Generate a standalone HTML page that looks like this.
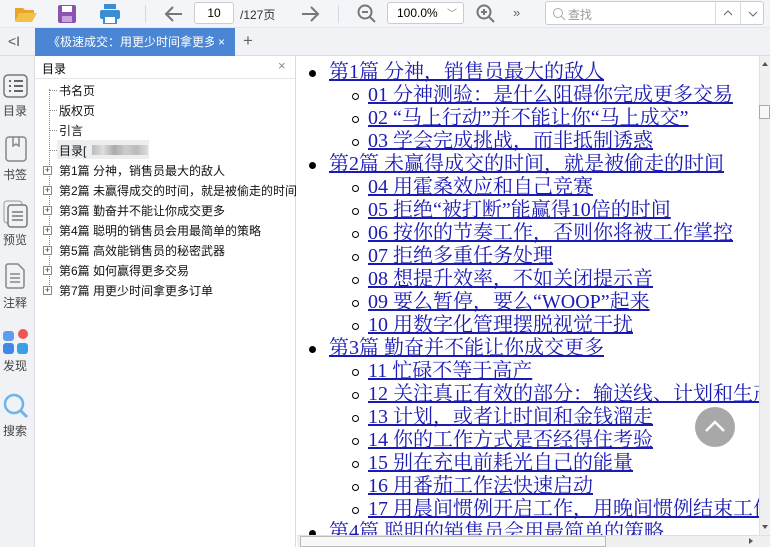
<!DOCTYPE html>
<html><head><meta charset="utf-8"><style>
*{margin:0;padding:0;box-sizing:border-box}
body{width:770px;height:547px;overflow:hidden;background:#fff;font-family:"Liberation Sans","Noto Sans CJK SC",sans-serif;position:relative}
.abs{position:absolute}
#tb{left:0;top:0;width:770px;height:28px;background:#f3f5f8;border-bottom:1px solid #e3e6ea}
#tabs{left:0;top:28px;width:770px;height:28px;background:#f0f2f5;border-bottom:1px solid #d8dbe0}
#side{left:0;top:56px;width:35px;height:491px;background:#f0f2f5;border-right:1px solid #d8dbe0}
#toc{left:35px;top:56px;width:261px;height:491px;background:#fff;border-right:1px solid #d8dbe0}
.sl{font-size:12px;color:#444;width:30px;text-align:center;left:0}
.ti{font-size:12px;color:#111;white-space:nowrap;left:59px}
.pl{left:43px;width:9px;height:9px;border:1px solid #888;font-size:9px;line-height:7px;text-align:center;color:#333;background:#fff}
#content{left:297px;top:57px;width:462px;height:478px;overflow:hidden;font-family:"Liberation Serif","Noto Serif CJK SC",serif;font-size:20px}
.l{position:absolute;white-space:nowrap;color:#1a1ab4;text-decoration:underline;line-height:23px}
.b1{position:absolute;width:7px;height:7px;border-radius:50%;background:#000}
.b2{position:absolute;width:7px;height:7px;border-radius:50%;border:1px solid #000}
</style></head><body>
<div id="tb" class="abs">
 <svg class="abs" style="left:14px;top:4px" width="24" height="20"><path d="M1 4h8l2 2h9v3H6L1 17z" fill="#e9a52b"/><path d="M5 9h18l-5 9H1z" fill="#f5c04a"/></svg>
 <svg class="abs" style="left:58px;top:5px" width="18" height="18"><rect x="0" y="0" width="18" height="18" rx="2" fill="#8c52b3"/><rect x="4" y="1" width="10" height="6" fill="#fff"/><rect x="4" y="11" width="10" height="6" fill="#c8a4dc"/></svg>
 <svg class="abs" style="left:100px;top:4px" width="20" height="20"><rect x="4" y="0" width="12" height="5" fill="#3a8fd4"/><rect x="0" y="6" width="20" height="9" rx="2" fill="#3a8fd4"/><rect x="4" y="12" width="12" height="8" fill="#fff" stroke="#3a8fd4" stroke-width="2"/></svg>
 <div class="abs" style="left:145px;top:5px;width:1px;height:18px;background:#d6d9de"></div>
 <svg class="abs" style="left:164px;top:5px" width="20" height="18"><path d="M18 9H3M9 2L2 9l7 7" stroke="#777" stroke-width="2" fill="none"/></svg>
 <div class="abs" style="left:194px;top:2px;width:40px;height:22px;border:1px solid #c9ccd1;border-radius:3px;background:#fff;font-size:12px;text-align:center;line-height:20px">10</div>
 <div class="abs" style="left:240px;top:6px;font-size:12px;color:#333">/127页</div>
 <svg class="abs" style="left:300px;top:5px" width="20" height="18"><path d="M2 9h15M11 2l7 7-7 7" stroke="#777" stroke-width="2" fill="none"/></svg>
 <div class="abs" style="left:338px;top:5px;width:1px;height:18px;background:#d6d9de"></div>
 <svg class="abs" style="left:357px;top:4px" width="20" height="20"><circle cx="8" cy="8" r="6.5" stroke="#777" stroke-width="2" fill="none"/><path d="M5 8h6M13 13l5 5" stroke="#777" stroke-width="2"/></svg>
 <div class="abs" style="left:387px;top:2px;width:77px;height:22px;border:1px solid #c9ccd1;border-radius:3px;background:#fff;font-size:12px;line-height:20px;padding-left:9px">100.0% <span style="color:#888;font-size:10px;margin-left:6px">﹀</span></div>
 <svg class="abs" style="left:476px;top:4px" width="20" height="20"><circle cx="8" cy="8" r="6.5" stroke="#777" stroke-width="2" fill="none"/><path d="M5 8h6M8 5v6M13 13l5 5" stroke="#777" stroke-width="2"/></svg>
 <div class="abs" style="left:513px;top:5px;font-size:13px;color:#666">»</div>
 <div class="abs" style="left:545px;top:1px;width:219px;height:24px;border:1px solid #c9ccd1;border-radius:3px;background:#fff">
  <svg class="abs" style="left:6px;top:5px" width="14" height="14"><circle cx="6" cy="6" r="4.5" stroke="#aaa" fill="none"/><path d="M9 9l4 4" stroke="#aaa"/></svg>
  <div class="abs" style="left:22px;top:4px;font-size:12px;color:#999">查找</div>
  <div class="abs" style="left:169px;top:0;width:1px;height:22px;background:#d6d9de"></div>
  <div class="abs" style="left:194px;top:0;width:1px;height:22px;background:#d6d9de"></div>
  <svg class="abs" style="left:177px;top:8px" width="10" height="6"><path d="M1 5l4-4 4 4" stroke="#666" fill="none"/></svg>
  <svg class="abs" style="left:202px;top:9px" width="10" height="6"><path d="M1 1l4 4 4-4" stroke="#666" fill="none"/></svg>
 </div>
</div>
<div id="tabs" class="abs">
 <div class="abs" style="left:8px;top:5px;font-size:14px;color:#555">&lt;I</div>
 <div class="abs" style="left:35px;top:0;width:200px;height:28px;background:#4a86d4;color:#fff;font-size:12px;line-height:28px;padding-left:13px;white-space:nowrap;overflow:hidden"><span style="display:inline-block;width:166px;overflow:hidden;vertical-align:top">《极速成交：用更少时间拿更多订单》</span><span style="position:absolute;left:183px">×</span></div>
 <div class="abs" style="left:243px;top:3px;font-size:17px;color:#666">+</div>
</div>
<div id="side" class="abs">
 <svg class="abs" style="left:3px;top:18px" width="25" height="24"><rect x="1" y="1" width="23" height="22" rx="4" fill="none" stroke="#777" stroke-width="1.5"/><path d="M6 7h2M11 7h9M6 12h2M11 12h9M6 17h2M11 17h9" stroke="#666" stroke-width="2"/></svg>
 <div class="abs sl" style="top:46px">目录</div>
 <svg class="abs" style="left:5px;top:80px" width="22" height="26"><rect x="1" y="1" width="20" height="24" rx="3" fill="none" stroke="#888" stroke-width="1.5"/><path d="M8 1v9l3-2 3 2V1" stroke="#888" fill="none" stroke-width="1.5"/></svg>
 <div class="abs sl" style="top:110px">书签</div>
 <svg class="abs" style="left:3px;top:144px" width="26" height="28"><rect x="1" y="1" width="18" height="22" rx="3" fill="none" stroke="#999"/><rect x="5" y="5" width="19" height="22" rx="3" fill="#f0f2f5" stroke="#777" stroke-width="1.5"/><path d="M9 12h11M9 16h11M9 20h11" stroke="#777" stroke-width="1.5"/></svg>
 <div class="abs sl" style="top:175px">预览</div>
 <svg class="abs" style="left:4px;top:207px" width="22" height="26"><path d="M4 1h10l6 6v16a2 2 0 0 1-2 2H4a2 2 0 0 1-2-2V3a2 2 0 0 1 2-2z" fill="none" stroke="#888" stroke-width="1.5"/><path d="M6 11h10M6 15h10M6 19h10" stroke="#888" stroke-width="1.5"/></svg>
 <div class="abs sl" style="top:238px">注释</div>
 <svg class="abs" style="left:3px;top:272px" width="26" height="26"><rect x="0" y="3" width="11" height="10" rx="3" fill="#5f9cf0"/><circle cx="20" cy="6" r="5" fill="#f25454"/><rect x="0" y="15" width="11" height="11" rx="3" fill="#3d8ae8"/><rect x="14" y="15" width="11" height="11" rx="3" fill="#3d9ee8"/></svg>
 <div class="abs sl" style="top:301px">发现</div>
 <svg class="abs" style="left:3px;top:337px" width="26" height="26"><circle cx="11" cy="11" r="9" fill="none" stroke="#6cb4ea" stroke-width="2.5"/><path d="M17 17l7 7" stroke="#6cb4ea" stroke-width="3"/></svg>
 <div class="abs sl" style="top:366px">搜索</div>
</div>
<div id="toc" class="abs">
 <div class="abs" style="left:0;top:0;width:260px;height:23px;border-bottom:1px solid #e3e6ea"></div>
 <div class="abs" style="left:7px;top:4px;font-size:12px">目录</div>
 <div class="abs" style="left:243px;top:2px;font-size:13px;color:#888">×</div>
</div>
<div class="abs" style="left:49px;top:89px;height:206px;border-left:1px dotted #888"></div>
<div class="abs" style="left:49px;top:90px;width:8px;border-top:1px dotted #888"></div>
<div class="abs" style="left:49px;top:110px;width:8px;border-top:1px dotted #888"></div>
<div class="abs" style="left:49px;top:130px;width:8px;border-top:1px dotted #888"></div>
<div class="abs" style="left:49px;top:150px;width:8px;border-top:1px dotted #888"></div>
<div class="abs ti" style="top:82px">书名页</div>
<div class="abs ti" style="top:102px">版权页</div>
<div class="abs ti" style="top:122px">引言</div>
<div class="abs" style="left:57px;top:140px;width:92px;height:19px;background:#eceef0"></div>
<div class="abs ti" style="top:142px">目录[</div>
<div class="abs" style="left:92px;top:145px;width:56px;height:10px;background:linear-gradient(90deg,#bbb,#ddd,#aaa,#ccc,#bbb,#ddd)"></div>
<div class="abs pl" style="top:166px">+</div><div class="abs ti" style="top:162px">第1篇 分神，销售员最大的敌人</div>
<div class="abs pl" style="top:186px">+</div><div class="abs ti" style="top:182px;width:237px;overflow:hidden">第2篇 未赢得成交的时间，就是被偷走的时间</div>
<div class="abs pl" style="top:206px">+</div><div class="abs ti" style="top:202px">第3篇 勤奋并不能让你成交更多</div>
<div class="abs pl" style="top:226px">+</div><div class="abs ti" style="top:222px">第4篇 聪明的销售员会用最简单的策略</div>
<div class="abs pl" style="top:246px">+</div><div class="abs ti" style="top:242px">第5篇 高效能销售员的秘密武器</div>
<div class="abs pl" style="top:266px">+</div><div class="abs ti" style="top:262px">第6篇 如何赢得更多交易</div>
<div class="abs pl" style="top:286px">+</div><div class="abs ti" style="top:282px">第7篇 用更少时间拿更多订单</div>

<div id="content" class="abs">
<div class="b1" style="left:12px;top:13px"></div><div class="l" style="left:32px;top:4px">第1篇 分神，销售员最大的敌人</div>
<div class="b2" style="left:55px;top:36px"></div><div class="l" style="left:71px;top:27px">01 分神测验：是什么阻碍你完成更多交易</div>
<div class="b2" style="left:55px;top:59px"></div><div class="l" style="left:71px;top:50px">02 “马上行动”并不能让你“马上成交”</div>
<div class="b2" style="left:55px;top:82px"></div><div class="l" style="left:71px;top:73px">03 学会完成挑战，而非抵制诱惑</div>
<div class="b1" style="left:12px;top:105px"></div><div class="l" style="left:32px;top:96px">第2篇 未赢得成交的时间，就是被偷走的时间</div>
<div class="b2" style="left:55px;top:128px"></div><div class="l" style="left:71px;top:119px">04 用霍桑效应和自己竞赛</div>
<div class="b2" style="left:55px;top:151px"></div><div class="l" style="left:71px;top:142px">05 拒绝“被打断”能赢得10倍的时间</div>
<div class="b2" style="left:55px;top:174px"></div><div class="l" style="left:71px;top:165px">06 按你的节奏工作，否则你将被工作掌控</div>
<div class="b2" style="left:55px;top:197px"></div><div class="l" style="left:71px;top:188px">07 拒绝多重任务处理</div>
<div class="b2" style="left:55px;top:220px"></div><div class="l" style="left:71px;top:211px">08 想提升效率，不如关闭提示音</div>
<div class="b2" style="left:55px;top:243px"></div><div class="l" style="left:71px;top:234px">09 要么暂停，要么“WOOP”起来</div>
<div class="b2" style="left:55px;top:266px"></div><div class="l" style="left:71px;top:257px">10 用数字化管理摆脱视觉干扰</div>
<div class="b1" style="left:12px;top:289px"></div><div class="l" style="left:32px;top:280px">第3篇 勤奋并不能让你成交更多</div>
<div class="b2" style="left:55px;top:312px"></div><div class="l" style="left:71px;top:303px">11 忙碌不等于高产</div>
<div class="b2" style="left:55px;top:335px"></div><div class="l" style="left:71px;top:326px">12 关注真正有效的部分：输送线、计划和生产力</div>
<div class="b2" style="left:55px;top:358px"></div><div class="l" style="left:71px;top:349px">13 计划，或者让时间和金钱溜走</div>
<div class="b2" style="left:55px;top:381px"></div><div class="l" style="left:71px;top:372px">14 你的工作方式是否经得住考验</div>
<div class="b2" style="left:55px;top:404px"></div><div class="l" style="left:71px;top:395px">15 别在充电前耗光自己的能量</div>
<div class="b2" style="left:55px;top:427px"></div><div class="l" style="left:71px;top:418px">16 用番茄工作法快速启动</div>
<div class="b2" style="left:55px;top:450px"></div><div class="l" style="left:71px;top:441px">17 用晨间惯例开启工作，用晚间惯例结束工作</div>
<div class="b1" style="left:12px;top:473px"></div><div class="l" style="left:32px;top:464px">第4篇 聪明的销售员会用最简单的策略</div>
</div>
<div class="abs" style="left:695px;top:407px;width:40px;height:40px;border-radius:50%;background:#a8a8a8"></div>
<svg class="abs" style="left:703px;top:418px" width="24" height="16"><path d="M3 13l9-9 9 9" stroke="#fff" stroke-width="2.5" fill="none"/></svg>
<div class="abs" style="left:759px;top:56px;width:11px;height:479px;background:#f0f0f0;border-left:1px solid #e0e0e0"></div>
<div class="abs" style="left:762px;top:62px;width:0;height:0;border-left:3px solid transparent;border-right:3px solid transparent;border-bottom:4px solid #555"></div>
<div class="abs" style="left:759px;top:105px;width:11px;height:14px;background:#f7f7f7;border:1px solid #aaa"></div>
<div class="abs" style="left:762px;top:525px;width:0;height:0;border-left:3px solid transparent;border-right:3px solid transparent;border-top:4px solid #555"></div>
<div class="abs" style="left:297px;top:535px;width:473px;height:12px;background:#f0f0f0;border-top:1px solid #e0e0e0"></div>
<div class="abs" style="left:300px;top:536px;width:306px;height:11px;background:#f7f7f7;border:1px solid #bbb"></div>
<div class="abs" style="left:749px;top:538px;width:0;height:0;border-top:3px solid transparent;border-bottom:3px solid transparent;border-left:4px solid #555"></div>
</body></html>
